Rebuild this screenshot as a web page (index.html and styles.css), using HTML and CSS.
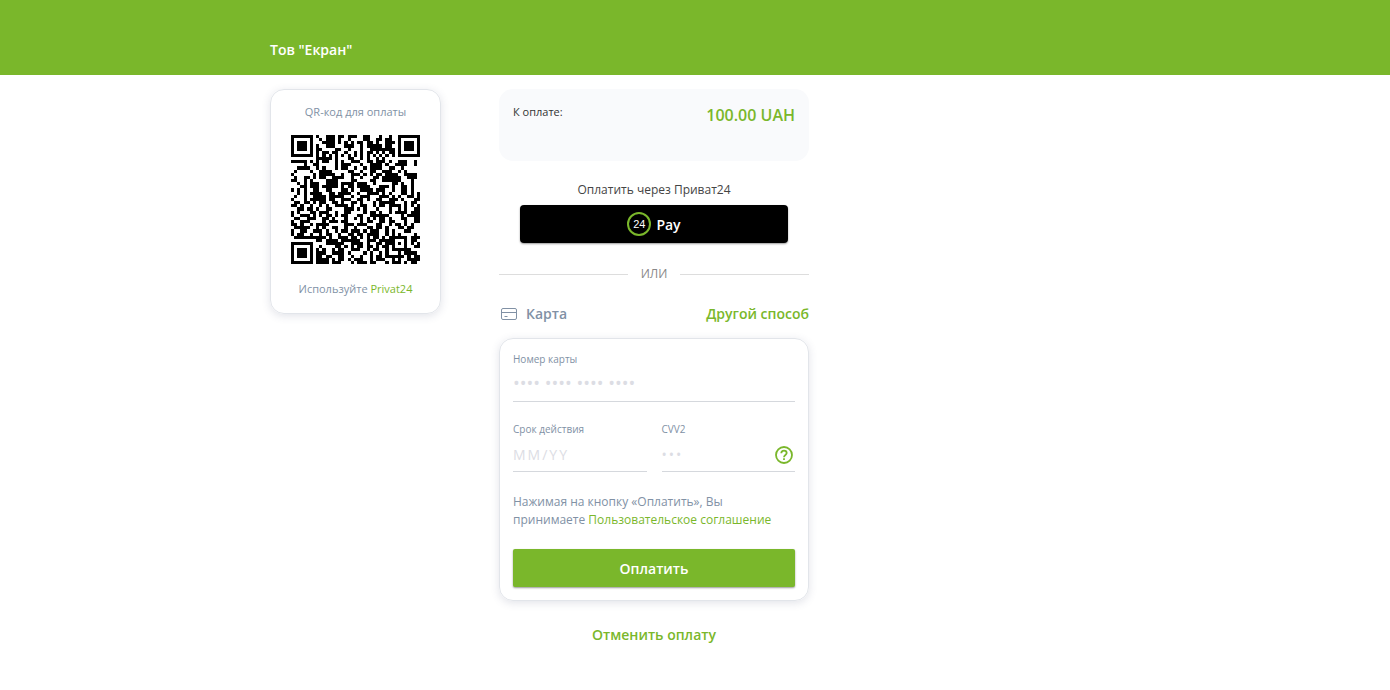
FILE: index.html
```html
<!DOCTYPE html>
<html lang="ru">
<head>
    <meta charset="UTF-8">
    <meta name="viewport" content="width=device-width, initial-scale=1.0">
    <title>Оплата</title>
    <link rel="stylesheet" href="styles.css">
</head>
<body>
    <header class="header">
        <div class="container">
            <h1 class="company">Тов "Екран"</h1>
        </div>
    </header>

    <main class="container content">
        <aside class="qr-card">
            <p>QR-код для оплаты</p>
            <svg class="qr" id="qr" viewBox="0 0 41 41" role="img" aria-label="QR-код"></svg>
            <p>Используйте <a href="#">Privat24</a></p>
        </aside>

        <section class="payment">
            <div class="amount">
                <span class="amount-label">К оплате:</span>
                <span class="amount-value">100.00 UAH</span>
            </div>

            <div class="privat">
                <p class="privat-title">Оплатить через Приват24</p>
                <button type="button" class="btn-privat">
                    <span class="logo24">24</span>
                    Pay
                </button>
            </div>

            <div class="divider">ИЛИ</div>

            <div class="methods">
                <span class="method">
                    <svg width="16" height="12" viewBox="0 0 16 12" fill="none" stroke="#8191a5">
                        <rect x="0.5" y="0.5" width="15" height="11" rx="1.5"/>
                        <path d="M0.5 4.5h15M3.5 8.5h3"/>
                    </svg>
                    Карта
                </span>
                <a href="#" class="other">Другой способ</a>
            </div>

            <form class="card-form">
                <div class="field">
                    <label for="card">Номер карты</label>
                    <input type="text" id="card" class="card-number" name="card" placeholder="•••• •••• •••• ••••">
                </div>
                <div class="row">
                    <div class="field">
                        <label for="expire">Срок действия</label>
                        <input type="text" id="expire" name="expire" placeholder="MM/YY">
                    </div>
                    <div class="field">
                        <label for="cvv">CVV2</label>
                        <div class="cvv">
                            <input type="text" id="cvv" name="cvv" placeholder="•••">
                            <button type="button" class="help" aria-label="CVV2">
                                <svg width="18" height="18" viewBox="0 0 18 18" fill="none" stroke="#7ab72b" stroke-width="1.8">
                                    <circle cx="9" cy="9" r="8"/>
                                    <path d="M6.3 7.2c0-1.6 1.2-2.6 2.7-2.6s2.7 1 2.7 2.5c0 1.9-2.7 2-2.7 4.1M9 12.3v1.8"/>
                                </svg>
                            </button>
                        </div>
                    </div>
                </div>
                <p class="agreement">Нажимая на кнопку «Оплатить», Вы принимаете <a href="#">Пользовательское соглашение</a></p>
                <button type="submit" class="btn-pay">Оплатить</button>
            </form>

            <a href="#" class="cancel">Отменить оплату</a>
        </section>
    </main>

    <script src="qr.js"></script>
</body>
</html>
```
FILE: styles.css
```css
* {
    box-sizing: border-box;
}
body {
    margin: 0;
    background-color: #fff;
    color: #8191a5;
    font-family: "Open Sans", "Noto Sans", sans-serif;
    font-size: 12px;
    line-height: 18px;
}
p {
    margin: 0;
}
a {
    color: #7ab72b;
    text-decoration: none;
}
button {
    border: none;
    font-family: inherit;
    font-weight: 600;
    font-size: 14px;
    color: #fff;
    cursor: pointer;
}
.container {
    max-width: 850px;
    margin: 0 auto;
}
.header {
    padding: 38px 0 13px;
    background-color: #7ab72b;
}
.company {
    margin: 0;
    color: #fff;
    font-size: 14px;
    font-weight: 600;
    line-height: 24px;
}
.content {
    display: flex;
    align-items: flex-start;
    gap: 58px;
    padding: 14px 0;
}
.qr-card {
    display: flex;
    flex-direction: column;
    align-items: center;
    width: 171px;
    padding: 13px 10px 15px;
    border: 1px solid #e2e5ea;
    border-radius: 14px;
    box-shadow: 0 2px 8px rgba(60, 70, 110, 0.15);
    font-size: 11px;
}
.qr {
    width: 129px;
    height: 129px;
    margin: 14px 0 16px;
}
.payment {
    width: 310px;
}
.amount {
    display: flex;
    justify-content: space-between;
    height: 72px;
    padding: 14px;
    border-radius: 14px;
    background-color: #f9fafc;
}
.amount-label {
    color: #333;
    font-size: 11px;
}
.amount-value {
    color: #7ab72b;
    font-size: 16px;
    font-weight: 600;
    line-height: 24px;
}
.privat {
    padding: 20px 21px 0;
}
.privat-title {
    margin-bottom: 6px;
    color: #444;
    text-align: center;
}
.btn-privat {
    display: flex;
    align-items: center;
    justify-content: center;
    gap: 5px;
    width: 100%;
    height: 38px;
    border-radius: 4px;
    background-color: #000;
    box-shadow: 0 1px 2px rgba(0, 0, 0, 0.4);
}
.logo24 {
    width: 24px;
    height: 24px;
    border: 2px solid #7ab72b;
    border-radius: 50%;
    font-family: "Liberation Sans", sans-serif;
    font-size: 11px;
    font-weight: 400;
    line-height: 20px;
}
.divider {
    display: flex;
    align-items: center;
    gap: 13px;
    margin: 22px 0 21px;
    color: #888;
}
.divider::before,
.divider::after {
    content: "";
    flex: 1;
    border-top: 1px solid #ddd;
}
.methods {
    display: flex;
    justify-content: space-between;
    margin-bottom: 14px;
    font-size: 14px;
    font-weight: 600;
    line-height: 20px;
}
.method {
    display: flex;
    align-items: center;
    gap: 9px;
    padding-left: 2px;
}
.card-form {
    padding: 11px 13px 13px;
    border: 1px solid #e2e5ea;
    border-radius: 14px;
    box-shadow: 0 2px 8px rgba(60, 70, 110, 0.15);
}
.field {
    flex: 1;
    min-width: 0;
}
label {
    display: block;
    font-size: 10px;
}
input {
    display: block;
    width: 100%;
    height: 34px;
    padding: 0;
    border: none;
    border-bottom: 1px solid #d5d8dd;
    background: none;
    font-family: inherit;
    font-size: 14px;
    letter-spacing: 2px;
}
input::placeholder {
    color: #dcdde4;
}
.card-number {
    padding-bottom: 4px;
    font-size: 18px;
    letter-spacing: normal;
}
.row {
    display: flex;
    gap: 15px;
    margin: 18px 0 21px;
}
.cvv {
    position: relative;
}
.help {
    position: absolute;
    right: 2px;
    top: 8px;
    padding: 0;
    background: none;
}
.help svg {
    display: block;
}
.agreement {
    margin-bottom: 20px;
}
.btn-pay {
    width: 100%;
    height: 38px;
    border-radius: 2px;
    background-color: #7ab72b;
    box-shadow: 0 1px 2px rgba(0, 0, 0, 0.4);
}
.cancel {
    display: block;
    margin-top: 24px;
    font-size: 14px;
    font-weight: 600;
    line-height: 20px;
    text-align: center;
}
```
FILE: qr.js
```js
const rows = [
    '#######.#..###.##.### ..##...#..#..#######',
    '#.....#..#.###.#..#.. ..##..##.##..#.....#',
    '#.###.#...####.#.#.#. ##.##.#..###.#.###.#',
    '#.###.#.#..###...###. .#.#####.##..#.###.#',
    '#.###.#.##....##..#.. .#..########.#.###.#',
    '#.....#.#.##.##..#..# .#.##.#.#.##.#.....#',
    '#######.#.#.#.#.#.#.# .#.#.#.#.#.#.#######',
    '........#####.#...##. .#.#..#.#...........',
    '#####.#.#.##..#.#..## #..##.###.#..###..#.',
    '....#..##.....#.###.. .#..####.#..####..#.',
    '..####..#.#...#.##..# ..#.####..##..#.....',
    '.#....#..####.....##. .#..##..###..#.#....',
    '#......#.#####..#..## #.#.#.##.####..####.',
    '.#..##.#.##..####..#. .#...##.######..###.',
    '##..#.#....####....## ....##..######...#..',
    '..#.#.###..####.####. ###..#.....##.#..#..',
    '...##.###.#####.#.##. ####...###.#..##.#..',
    '#.#.#..##..##...##.#. .####.###..#..##.#..',
    '..#.#.####..##.####.. #..####.#.#...##.#.#',
    '.#..#..####.#####..#. .###...###.#.#..##.#',
    '#...#.#####.##..###.. ##.#..##..###.#...##',
    '.##.##.#.##..##.#..## .#...#.#####...#.##.',
    '##.#..#..#.#..####.#. .##..#.##.####.#.#.#',
    '..##.##.#..##....###. #.#...#...#..#.#..##',
    '#.#...##.###..#..##.. ..#.##.#..#.####.###',
    '#..###.#.#.##.#.##... ##..######....#.####',
    '.##..###..##.#...#..# .#.#.#.##.#...##..##',
    '#..###....#.###.##... .#.##..##.##...#..##',
    '##.#..#.####.....###. ###...##..#.##.#.#..',
    '.#####..#.#..##..#..# ...##.##.#...##.##..',
    '#..##..###.#..#.##.## #.#.###..#.#...##...',
    '#.##..#..#.##..#..##. ##.####..#.#.#....#.',
    '.##########.#..###.## .#.#.##.#.######.###',
    '........##.####.##### #..###.#####...#.##.',
    '#######....######..## ##.#..##.###.#.#.#.#',
    '#.....#..#....##.#.#. ##.##.#.##.#...#..##',
    '#.###.#.#.#..#.##..## #..#.##..#.######...',
    '#.###.#.###..####.#.. ..#.#..#.#...#.####.',
    '#.###.#.##.##..##..#. .#..#.##.######.#.##',
    '#.....#.####.#.##.#.# ##..#.###..#.#..####',
    '#######.####.###...#. ###.##...#.###.#.##.'
];

const qr = document.getElementById('qr');
let path = '';
rows.forEach((row, y) => {
    [...row.replace(' ', '')].slice(0, 41).forEach((cell, x) => {
        if (cell === '#') path += `M${x} ${y}h1v1h-1z`;
    });
});
qr.innerHTML = `<path d="${path}" shape-rendering="crispEdges"/>`;
```
